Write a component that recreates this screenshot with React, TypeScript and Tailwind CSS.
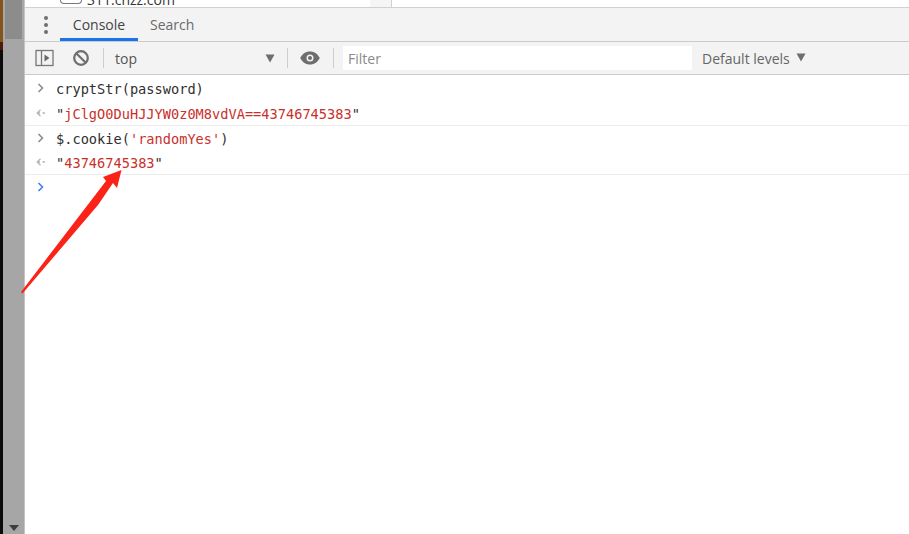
import React from 'react';

const Caret = ({ className }: { className: string }) => (
  <svg width="8" height="10" viewBox="0 0 8 10" fill="none" className={className}>
    <path d="M1.500 1 5.500 5 1.500 9" stroke="currentColor" strokeWidth="1.600" />
  </svg>
);

const BackArrow = () => (
  <svg width="10" height="8" viewBox="0 0 10 8" fill="none" className="text-[#b5b5b5]">
    <path d="M4.500 .8 1.200 4l3.300 3.200M1.200 4H4M6.500 4H9" stroke="currentColor" strokeWidth="1.300" />
  </svg>
);

const SidebarIcon = () => (
  <svg width="20" height="18" viewBox="0 0 20 18" fill="none">
    <rect x="1" y="1.500" width="17" height="15" stroke="#777" strokeWidth="1.300" />
    <path d="M6.500 1.500v15" stroke="#777" strokeWidth="1.300" />
    <path d="M9.500 5.500v7l5-3.500z" fill="#666" />
  </svg>
);

const ClearIcon = () => (
  <svg width="18" height="18" viewBox="0 0 18 18" fill="none">
    <circle cx="9" cy="9" r="6.800" stroke="#6e6e6e" strokeWidth="2.200" />
    <path d="M4.200 4.200 13.800 13.800" stroke="#6e6e6e" strokeWidth="2.200" />
  </svg>
);

const EyeIcon = () => (
  <svg width="20" height="14" viewBox="0 0 20 14">
    <path
      fillRule="evenodd"
      d="M10 .5C5.500.5 2 3.200.2 7 2 10.800 5.500 13.500 10 13.500S18 10.800 19.800 7C18 3.200 14.500.5 10 .5Zm0 3a3.500 3.500 0 1 1 0 7 3.500 3.500 0 0 1 0-7Zm0 1.500a2 2 0 1 0 0 4 2 2 0 0 0 0-4Z"
      fill="#6e6e6e"
    />
  </svg>
);

const Triangle = ({ className }: { className: string }) => (
  <svg width="10" height="9" viewBox="0 0 10 9" className={className}>
    <path d="M.5.5h9L5 8.500z" fill="currentColor" />
  </svg>
);

const Divider = () => <div className="h-[20px] w-px bg-[#cdcdcd]" />;

const App = () => {
  return (
    <div className="flex h-[534px] w-[909px] overflow-hidden bg-white font-['Open_Sans','Noto_Sans',sans-serif]">
      {/* left edge: page behind + scrollbar */}
      <div className="flex h-full w-[3px] flex-col">
        <div className="h-[42px] bg-[#85541a]" />
        <div className="h-[8px] bg-[#4a1a0c]" />
        <div className="flex-1 bg-[#0b0b0b]" />
      </div>
      <div className="relative flex h-full w-[22px] flex-col items-center justify-end border-r border-[#c4c4c4] bg-[#a6a6a6] pb-[3px]">
        <div className="absolute left-[2px] top-0 h-[39px] w-[17px] bg-[#8c8c8c]" />
        <div className="h-0 w-0 border-x-[5px] border-t-[6px] border-x-transparent border-t-[#3d3d3d]" />
      </div>

      <div className="relative flex min-w-0 flex-1 flex-col">
        {/* clipped network row above the drawer */}
        <div className="flex h-[8px] items-start overflow-hidden border-b border-[#d0d0d0] bg-white">
          <div className="ml-[35px] h-[4px] w-[22px] shrink-0 rounded-b-[4px] border-x border-b border-[#777]" />
          <span className="ml-[5px] mt-[-7px] text-[14px] leading-[14px] text-[#333]">311.cnzz.com</span>
          <div className="ml-auto h-full w-[21px] shrink-0 bg-[#f5f5f5]" />
          <div className="mr-[517px] h-full w-px shrink-0 bg-[#d0d0d0]" />
        </div>

        {/* tab strip */}
        <div className="flex h-[34px] items-stretch border-b border-[#cbcbcb] bg-[#f3f3f3] pl-[19px]">
          <div className="flex w-[16px] flex-col items-start gap-[3px] self-center">
            <span className="size-[4px] rounded-full bg-[#6e6e6e]" />
            <span className="size-[4px] rounded-full bg-[#6e6e6e]" />
            <span className="size-[4px] rounded-full bg-[#6e6e6e]" />
          </div>
          <div className="flex w-[78px] items-center justify-center border-b-[3px] border-[#1a73e8] pt-[3px] text-[14px] text-[#444]">
            Console
          </div>
          <div className="flex items-center pl-[12px] text-[14px] text-[#6a6a6a]">Search</div>
        </div>

        {/* console toolbar */}
        <div className="flex h-[33px] items-center border-b border-[#cbcbcb] bg-[#f3f3f3] pl-[10px]">
          <SidebarIcon />
          <div className="ml-[17px]">
            <ClearIcon />
          </div>
          <div className="ml-[13px]">
            <Divider />
          </div>
          <div className="flex w-[183px] items-center justify-between pl-[11px] pr-[12px] text-[14px] text-[#555]">
            <span>top</span>
            <Triangle className="text-[#6e6e6e]" />
          </div>
          <Divider />
          <div className="ml-[12px]">
            <EyeIcon />
          </div>
          <div className="ml-[13px]">
            <Divider />
          </div>
          <div className="ml-[9px] flex h-[24px] w-[349px] items-center bg-white pl-[5px] text-[14px] text-[#8a8a8a]">
            Filter
          </div>
          <span className="ml-[10px] text-[14px] text-[#666]">Default levels</span>
          <Triangle className="ml-[6px] mb-[2px] text-[#6e6e6e]" />
        </div>

        {/* console messages */}
        <div className="font-['DejaVu_Sans_Mono','Liberation_Mono',monospace] text-[13.650px] leading-[16px]">
          <div className="flex h-[25px] items-center pl-[12px] text-[#303030]">
            <Caret className="text-[#8c8c8c]" />
            <span className="ml-[11px] pt-[3px]">cryptStr(password)</span>
          </div>
          <div className="flex h-[26px] items-center border-b border-[#ececec] pl-[11px] text-[#c9302b]">
            <BackArrow />
            <span className="ml-[10px] pt-[3px]">
              <span className="text-[#303030]">"</span>jClgO0DuHJJYW0z0M8vdVA==43746745383<span className="text-[#303030]">"</span>
            </span>
          </div>
          <div className="flex h-[24px] items-center pl-[12px] text-[#303030]">
            <Caret className="text-[#8c8c8c]" />
            <span className="ml-[11px] pt-[1px]">
              $.cookie(<span className="text-[#c9302b]">'randomYes'</span>)
            </span>
          </div>
          <div className="flex h-[25px] items-center border-b border-[#ececec] pl-[11px] text-[#c9302b]">
            <BackArrow />
            <span className="ml-[10px] pt-[1px]">
              <span className="text-[#303030]">"</span>43746745383<span className="text-[#303030]">"</span>
            </span>
          </div>
          <div className="flex h-[24px] items-center pl-[12px]">
            <Caret className="text-[#3b82f6]" />
          </div>
        </div>

        {/* red annotation arrow */}
        <svg width="110" height="130" viewBox="0 0 110 130" className="absolute left-[-4px] top-[165px]">
          <path d="M0 127 85 16 82 12 100.500 5 96 23 92 18 77 40 1.500 128.500Z" fill="#fb2318" />
        </svg>
      </div>
    </div>
  );
};

export default App;
